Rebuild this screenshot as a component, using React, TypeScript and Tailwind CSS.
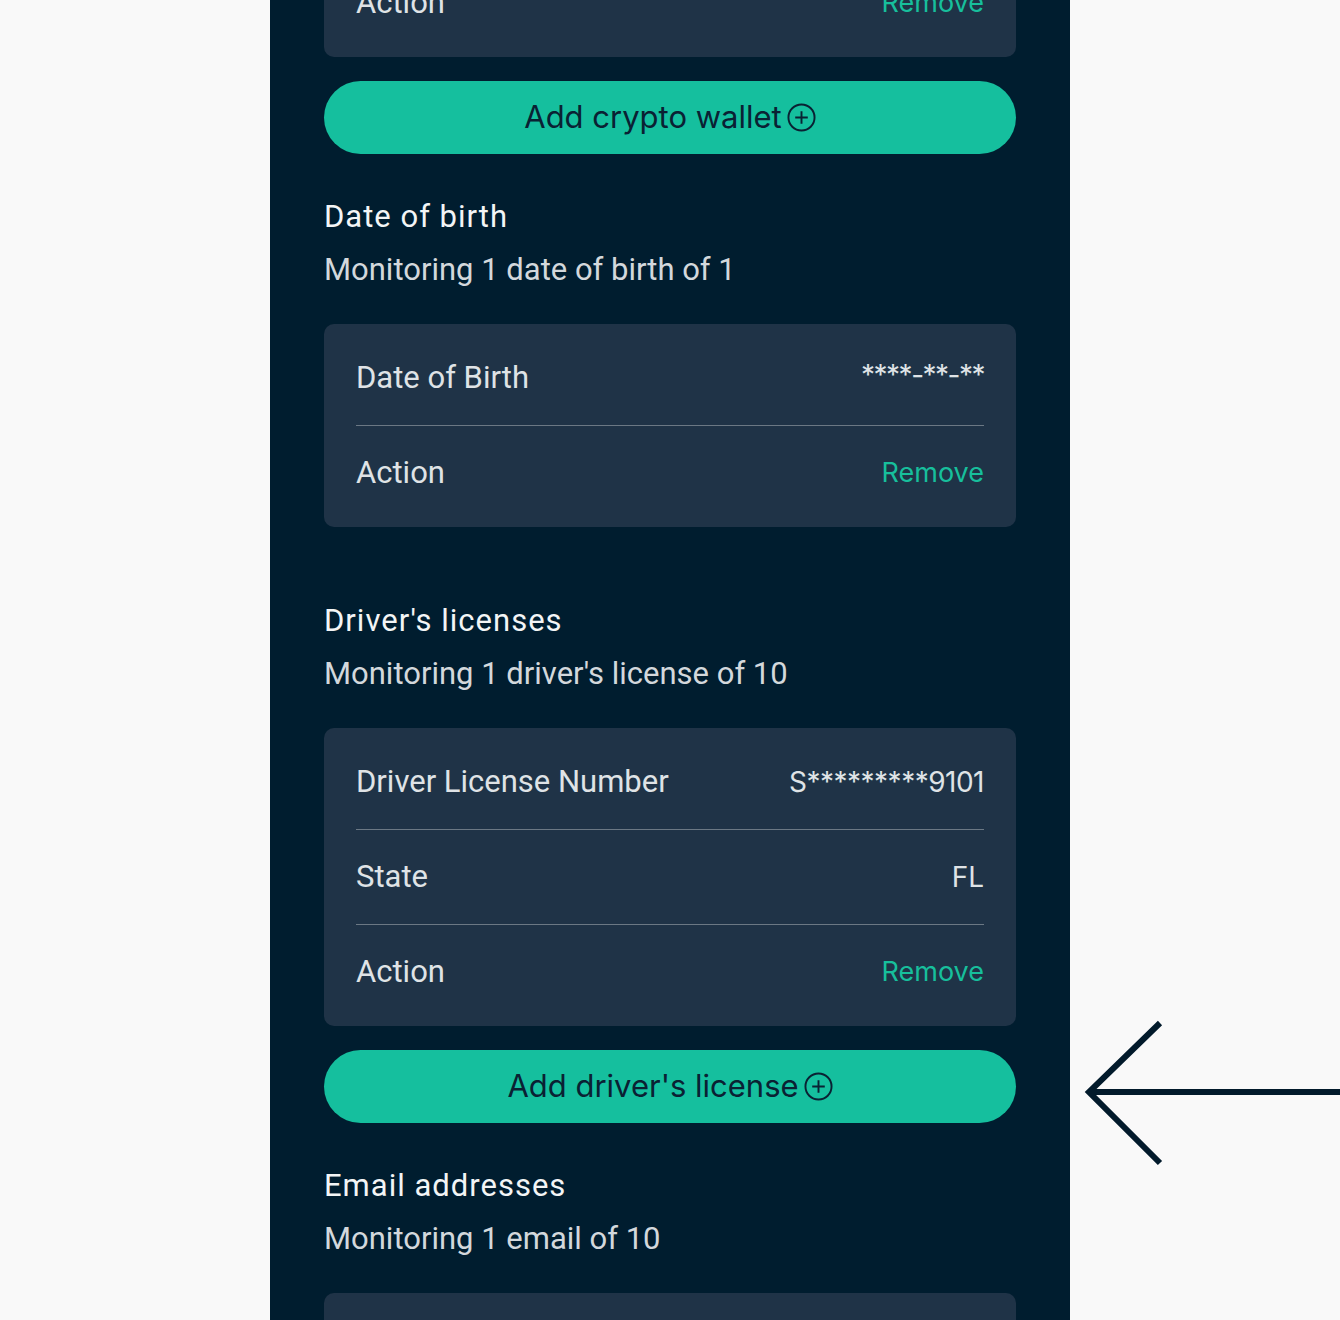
import { Fragment } from "react";

type Row = { label: string; value: string; action?: boolean; valueClass?: string };

const PlusCircle = () => (
    <svg width="29" height="29" viewBox="0 0 30 30" fill="none" stroke="currentColor" strokeWidth="2">
        <circle cx="15" cy="15" r="13.5" />
        <path d="M15 8.5v13M8.5 15h13" />
    </svg>
);

const Card = ({ rows, className = "" }: { rows: Row[]; className?: string }) => (
    <div className={`rounded-[10px] bg-[#1f3347] px-8 py-[7px] ${className}`}>
        {rows.map((row, i) => (
            <Fragment key={row.label}>
                {i > 0 && <div className="h-px bg-[#6b7884]" />}
                <div className="flex h-[94px] items-center justify-between">
                    <span className="font-['Roboto'] text-[31px] text-[#dfe3e6]">{row.label}</span>
                    {row.action ? (
                        <span className="font-['Inter'] text-[27px] text-[#17bf9c]">Remove</span>
                    ) : (
                        <span className={`font-['Inter'] text-[28px] text-[#dfe3e6] ${row.valueClass ?? ""}`}>
                            {row.value}
                        </span>
                    )}
                </div>
            </Fragment>
        ))}
    </div>
);

const AddButton = ({ label }: { label: string }) => (
    <button className="mt-6 flex h-[73px] w-full items-center justify-center gap-[5px] rounded-full bg-[#15bf9e] font-['Inter'] text-[31px] text-[#0a2133]">
        {label}
        <PlusCircle />
    </button>
);

const Heading = ({ title, sub, className = "" }: { title: string; sub: string; className?: string }) => (
    <div className={`font-['Roboto'] ${className}`}>
        <h2 className="text-[31px] leading-9 tracking-[1px] text-[#f3f5f6]">{title}</h2>
        <p className="mt-[17px] text-[31px] leading-9 text-[#d3d8dc]">{sub}</p>
    </div>
);

export default function App() {
    return (
        <div className="relative h-[1320px] overflow-hidden bg-[#f9f9f9]">
            <div className="ml-[270px] min-h-[1400px] w-[800px] bg-[#001d2f] px-[54px]">
                <Card className="-mt-[51px]" rows={[{ label: "Action", value: "", action: true }]} />
                <AddButton label="Add crypto wallet" />

                <Heading className="mt-[45px]" title="Date of birth" sub="Monitoring 1 date of birth of 1" />
                <Card
                    className="mt-9"
                    rows={[
                        { label: "Date of Birth", value: "****-**-**", valueClass: "-translate-y-[3px] tracking-[-1.5px]" },
                        { label: "Action", value: "", action: true },
                    ]}
                />

                <Heading className="mt-[76px]" title="Driver's licenses" sub="Monitoring 1 driver's license of 10" />
                <Card
                    className="mt-9"
                    rows={[
                        { label: "Driver License Number", value: "S*********9101", valueClass: "tracking-[-0.5px]" },
                        { label: "State", value: "FL" },
                        { label: "Action", value: "", action: true },
                    ]}
                />
                <AddButton label="Add driver's license" />

                <Heading className="mt-[45px]" title="Email addresses" sub="Monitoring 1 email of 10" />
                <Card className="mt-9" rows={[{ label: "Email", value: "" }]} />
            </div>

            {/* pointer arrow */}
            <svg
                className="absolute left-[1080px] top-[1015px]"
                width="260"
                height="156"
                viewBox="0 0 260 156"
                fill="none"
                stroke="#021a2b"
                strokeWidth="6"
            >
                <path d="M80 8 L9 77 L80 148" />
                <path d="M9 77 H260" />
            </svg>
        </div>
    );
}
